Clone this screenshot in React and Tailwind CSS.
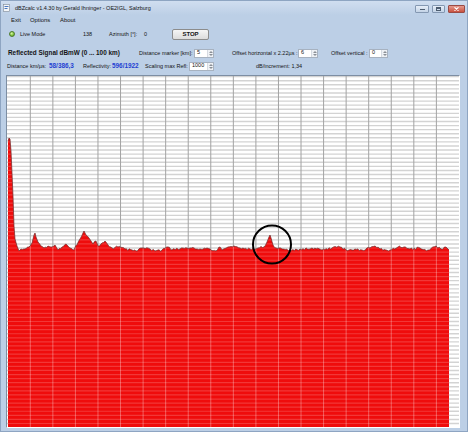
import React from 'react';

const OX = 7;
const OY = 75;
const CHART_W = 452;
const CHART_H = 351;
const ROWS = 86;

// signal profile in screen coords (top edge of the red area)
const KEY = [
  [8, 140], [9, 137], [10, 138], [11, 150], [12, 172], [13, 195], [14, 225], [15, 238], [17, 245],
  [19, 250], [21, 248], [25, 248], [29, 246], [32, 242], [34, 234], [35, 232], [36, 236], [38, 241],
  [41, 245], [44, 247], [48, 245], [52, 246], [55, 244], [58, 249], [62, 246], [66, 243], [70, 247],
  [73, 249], [77, 244], [80, 238], [83, 232], [84, 230], [86, 234], [89, 237], [91, 240], [93, 243],
  [96, 240], [98, 245], [101, 243], [105, 240], [108, 244], [112, 247], [118, 246], [125, 248],
  [132, 249], [136, 250], [142, 247], [150, 248], [155, 250], [162, 249], [168, 246], [172, 249],
  [180, 248], [190, 247], [200, 248], [210, 248], [216, 250], [219, 246], [222, 249], [228, 246],
  [234, 245], [240, 247], [250, 248], [258, 247], [264, 246], [267, 241], [269, 236], [270, 234],
  [271, 237], [273, 244], [276, 247], [282, 248], [290, 249], [300, 248], [312, 247], [322, 249],
  [332, 247], [340, 246], [346, 249], [355, 248], [362, 249], [370, 247], [375, 245], [380, 248],
  [390, 249], [398, 246], [404, 246], [410, 248], [420, 247], [428, 249], [436, 245], [441, 248],
  [446, 246], [448, 248], [449, 249],
];

function noise(x) {
  const v = Math.sin(x * 12.9898) * 43758.5453;
  return v - Math.floor(v) - 0.5;
}

function buildProfile() {
  const pts = [];
  for (let i = 0; i < KEY.length - 1; i++) {
    const [x0, y0] = KEY[i];
    const [x1, y1] = KEY[i + 1];
    const steps = Math.max(1, Math.round((x1 - x0) / 1.5));
    for (let s = 0; s < steps; s++) {
      const t = s / steps;
      const x = x0 + (x1 - x0) * t;
      let y = y0 + (y1 - y0) * t;
      if (x > 17 && s > 0) y += noise(x) * 2.2;
      pts.push([x - OX, y - OY]);
    }
  }
  const last = KEY[KEY.length - 1];
  pts.push([last[0] - OX, last[1] - OY]);
  return pts;
}

const PROFILE = buildProfile();
const TOP_LINE = PROFILE.map(([x, y], i) => `${i ? 'L' : 'M'}${x.toFixed(1)} ${y.toFixed(1)}`).join(' ');
const FILL = `M${8 - OX} ${CHART_H} ${TOP_LINE.replace(/^M/, 'L')} L${449 - OX} ${CHART_H} Z`;

const V_LINES = Array.from({ length: 19 }, (_, i) => 23.3 + 22.56 * i);
const H_LINES = Array.from({ length: ROWS }, (_, k) => 0.6 + (k * CHART_H) / ROWS);

function Chart() {
  return (
    <svg width={CHART_W} height={CHART_H} className="block">
      <defs>
        <clipPath id="sig">
          <path d={FILL} />
        </clipPath>
      </defs>
      <rect width={CHART_W} height={CHART_H} fill="#ffffff" />
      {H_LINES.map((y) => (
        <line key={`h${y}`} x1="0" x2={CHART_W} y1={y} y2={y} stroke="#d3d3d3" strokeWidth="1.4" />
      ))}
      {V_LINES.map((x) => (
        <line key={`v${x}`} x1={x} x2={x} y1="0" y2={CHART_H} stroke="#a3a3a3" strokeWidth="1" />
      ))}
      <path d={FILL} fill="#ef0c0c" />
      <g clipPath="url(#sig)">
        {H_LINES.map((y) => (
          <line key={`hr${y}`} x1="0" x2={CHART_W} y1={y} y2={y} stroke="#ffffff" strokeOpacity="0.18" strokeWidth="1.2" />
        ))}
        {V_LINES.map((x) => (
          <line key={`vr${x}`} x1={x} x2={x} y1="0" y2={CHART_H} stroke="#ffffff" strokeOpacity="0.32" strokeWidth="1" />
        ))}
      </g>
      <path d={TOP_LINE} fill="none" stroke="#6e2a2a" strokeWidth="0.7" />
      <circle cx={272 - OX} cy={243.5 - OY} r="19" fill="none" stroke="#000" strokeWidth="2" />
    </svg>
  );
}

function NumBox({ value, w }) {
  return (
    <div className={`flex h-[9px] shrink-0 items-center border border-[#a7b2c0] bg-white ${w}`}>
      <span className="flex-1 pl-[2px] leading-none">{value}</span>
      <div className="flex h-full w-[6px] flex-col items-center justify-center gap-[1px] border-l border-[#d6dbe2] bg-[#eef1f5]">
        <svg width="4" height="2" viewBox="0 0 4 2"><path d="M0 2 L2 0 L4 2 Z" fill="#8a8f96" /></svg>
        <svg width="4" height="2" viewBox="0 0 4 2"><path d="M0 0 L2 2 L4 0 Z" fill="#8a8f96" /></svg>
      </div>
    </div>
  );
}

export default function App() {
  return (
    <div className="flex h-[432px] w-[468px] flex-col overflow-hidden whitespace-nowrap border border-[#8ea5c2] bg-[#bccfe6] font-['Liberation_Sans',Arial,sans-serif] text-[5.5px] text-[#141414]">
      {/* title bar */}
      <div className="flex h-[14px] shrink-0 items-center bg-gradient-to-b from-[#d0def0] to-[#bccfe6]">
        <svg width="8" height="8" viewBox="0 0 8 8" className="ml-[2px]">
          <rect x="0.5" y="0.5" width="6" height="7" fill="#f4f6f8" stroke="#7c8894" strokeWidth="0.6" />
          <rect x="1.5" y="2" width="4" height="1" fill="#4a78c0" />
          <rect x="1.5" y="4" width="3" height="1" fill="#4a78c0" />
        </svg>
        <span className="ml-[4px] pt-[1px] text-[5.5px]">dBZcalc v1.4.30 by Gerald Ihninger - OE2IGL, Salzburg</span>
        <div className="ml-auto mr-[2px] mt-[1px] flex items-start gap-[3px]">
          <div className="flex h-[8px] w-[14px] items-end justify-center rounded-[1px] border border-[#8498b2] bg-gradient-to-b from-[#e6eef8] to-[#c3d3e6] pb-[2px]">
            <div className="h-[1px] w-[5px] bg-[#4d5d70]" />
          </div>
          <div className="flex h-[8px] w-[13px] items-center justify-center rounded-[1px] border border-[#8498b2] bg-gradient-to-b from-[#e6eef8] to-[#c3d3e6]">
            <div className="h-[4px] w-[5px] border border-t-2 border-[#4d5d70]" />
          </div>
          <div className="flex h-[8px] w-[17px] items-center justify-center rounded-[1px] border border-[#9a4a44] bg-gradient-to-b from-[#e59a8e] to-[#c8503f]">
            <svg width="5" height="4" viewBox="0 0 5 4"><path d="M0.5 0.3 L4.5 3.7 M4.5 0.3 L0.5 3.7" stroke="#fff" strokeWidth="1.1" /></svg>
          </div>
        </div>
      </div>

      {/* menu */}
      <div className="flex h-[11px] shrink-0 items-center pl-[10px] text-[5.9px]">
        <span className="w-[19px] shrink-0">Exit</span>
        <span className="w-[30px] shrink-0">Options</span>
        <span>About</span>
      </div>

      {/* row 1 */}
      <div className="flex h-[16px] shrink-0 items-center pl-[8px]">
        <div className="w-[11px] shrink-0">
          <div className="h-[6px] w-[6px] rounded-full border border-[#4c7a2a] bg-[radial-gradient(circle_at_40%_35%,#d8f6a8,#7fc43c_60%,#4e8a22)]" />
        </div>
        <span className="w-[63px] shrink-0">Live Mode</span>
        <span className="w-[26px] shrink-0">138</span>
        <span className="w-[35px] shrink-0">Azimuth [°]:</span>
        <span className="w-[28px] shrink-0">0</span>
        <div className="flex h-[11px] w-[37px] shrink-0 items-center justify-center rounded-[2px] border border-[#8c8c8c] bg-gradient-to-b from-[#f5f5f5] to-[#dcdcdc] text-[6px] font-bold">
          STOP
        </div>
      </div>

      {/* row 2 */}
      <div className="mt-[4px] flex h-[14px] shrink-0 items-center pl-[7px]">
        <span className="w-[131px] shrink-0 text-[6.4px] font-bold">Reflected Signal dBmW (0 ... 100 km)</span>
        <span className="w-[55px] shrink-0">Distance marker [km]:</span>
        <NumBox value="5" w="w-[20px]" />
        <span className="ml-[18px] w-[66px] shrink-0">Offset horizontal x 2.22µs :</span>
        <NumBox value="6" w="w-[20px]" />
        <span className="ml-[13px] w-[38px] shrink-0">Offset vertical :</span>
        <NumBox value="0" w="w-[19px]" />
      </div>

      {/* row 3 */}
      <div className="flex h-[12px] shrink-0 items-center pl-[6px]">
        <span className="w-[42px] shrink-0">Distance km/µs:</span>
        <span className="w-[34px] shrink-0 text-[6.4px] font-bold text-[#1f3fd2]">58/386,3</span>
        <span className="w-[29px] shrink-0">Reflectivity:</span>
        <span className="w-[33px] shrink-0 text-[6.4px] font-bold text-[#1f3fd2]">596/1922</span>
        <span className="w-[44px] shrink-0">Scaling max Refl:</span>
        <NumBox value="1000" w="w-[25px]" />
        <span className="ml-[42px] shrink-0">dB/increment: 1,34</span>
      </div>

      {/* chart */}
      <div className="ml-[5px] mt-[3px] h-[353px] w-[454px] shrink-0 border border-b-white border-l-[#7d8ea3] border-r-white border-t-[#7d8ea3] bg-white">
        <Chart />
      </div>
    </div>
  );
}
